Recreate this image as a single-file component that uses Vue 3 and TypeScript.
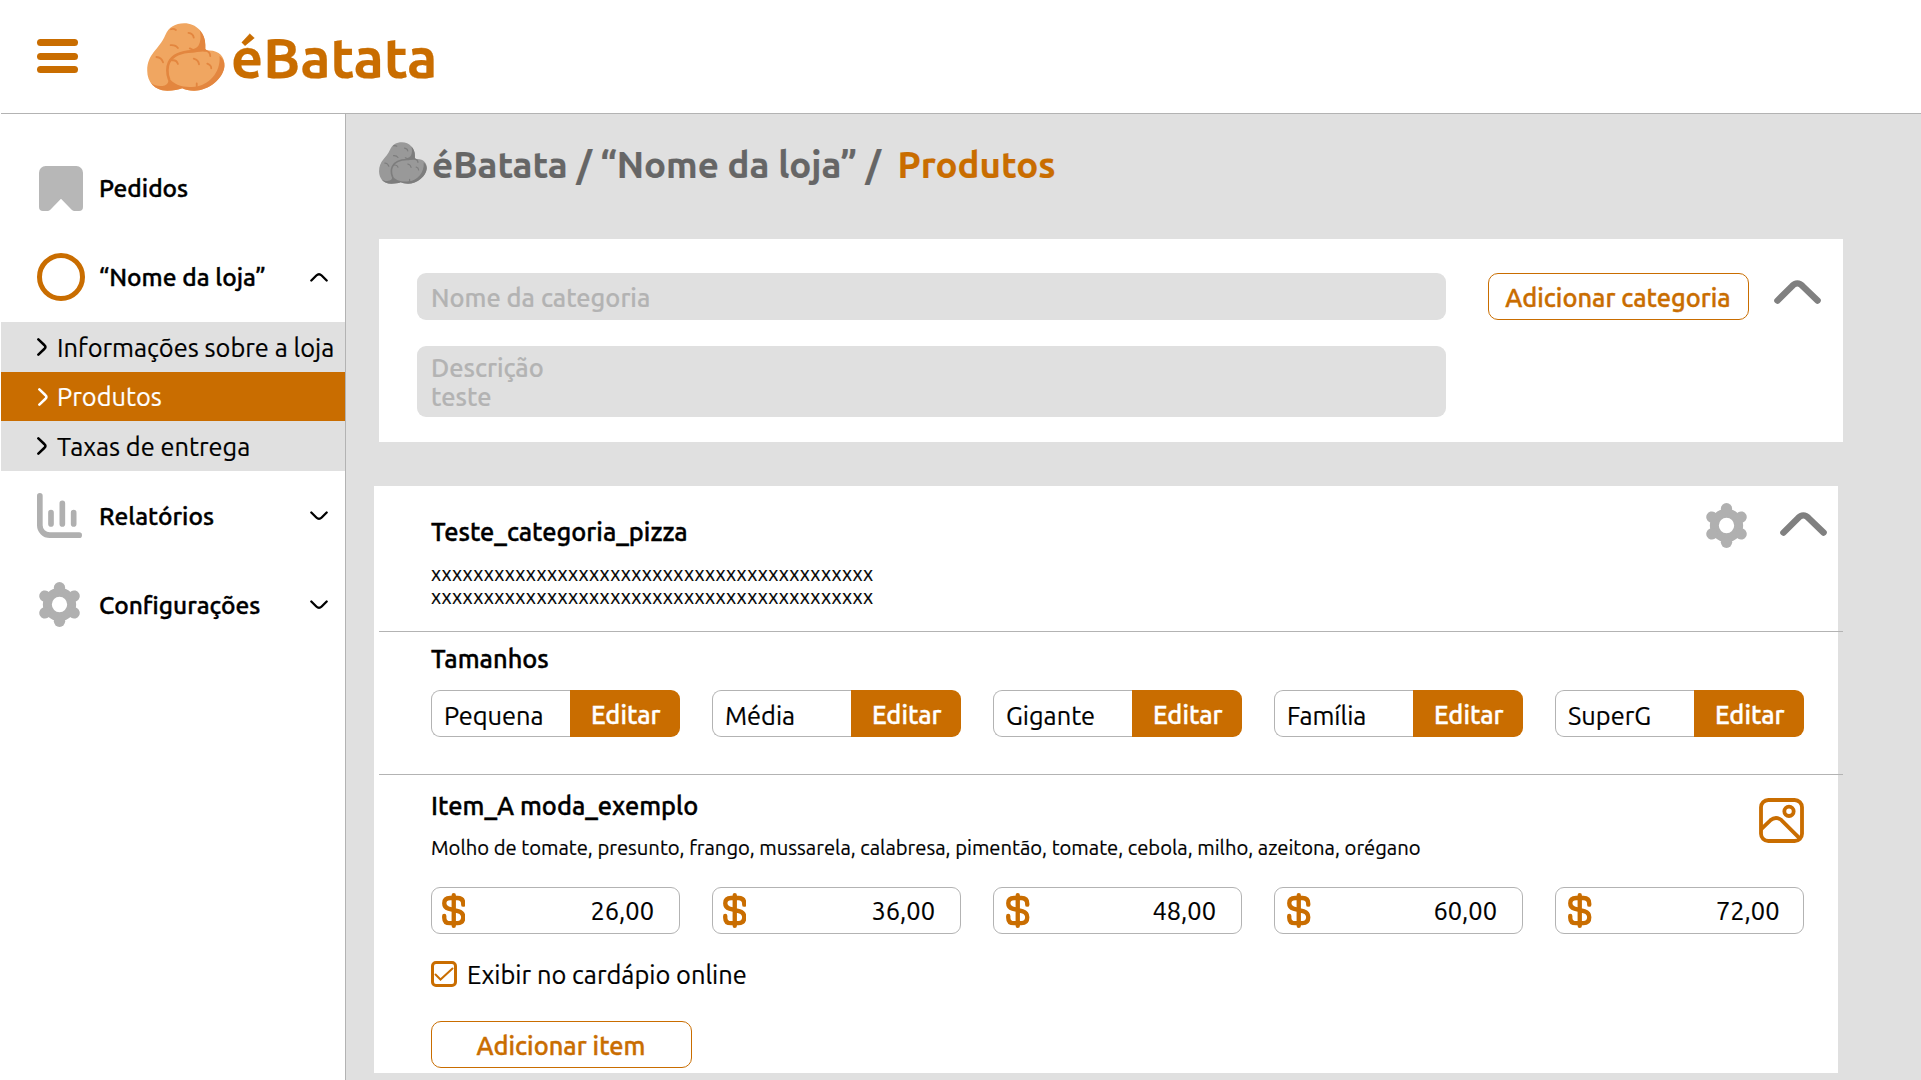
<script setup lang="ts">
import { h, type FunctionalComponent } from 'vue'

interface Size { name: string; price: string; wideInset: boolean }

const sizes: Size[] = [
  { name: 'Pequena', price: '26,00', wideInset: false },
  { name: 'Média', price: '36,00', wideInset: false },
  { name: 'Gigante', price: '48,00', wideInset: true },
  { name: 'Família', price: '60,00', wideInset: true },
  { name: 'SuperG', price: '72,00', wideInset: true },
]

const subItems = [
  { label: 'Informações sobre a loja', active: false },
  { label: 'Produtos', active: true },
  { label: 'Taxas de entrega', active: false },
]

const filler = 'x'.repeat(42)

const Potatoes: FunctionalComponent<{ body: string; shade: string }> = (p) =>
  h('svg', { viewBox: '441 68 235 206' }, [
    h('path', { fill: p.body, d: 'M553 69C590 69 617 98 617 135V152C655 146 676 168 675 196C674 232 630 273 583 273C568 273 556 270 547 266C535 271 520 273 502 273C463 273 441 247 441 212C441 160 476 150 496 104C506 81 526 69 553 69Z' }),
    h('path', { fill: p.shade, d: 'M600 90C612 102 617 117 617 135V151C600 149 590 156 574 156L560 155C572 148 590 147 596 137C604 124 604 105 600 90Z' }),
    h('path', { fill: p.shade, d: 'M452 249C463 259 480 261 494 257C506 253 507 242 503 231C523 258 554 265 585 261C625 258 665 219 660 168C671 175 676 187 675 199C672 236 628 273 583 273C568 273 556 270 547 266C535 271 520 273 502 273C479 273 462 264 452 249Z' }),
    h('path', { fill: 'none', stroke: p.shade, 'stroke-width': 8, 'stroke-linecap': 'round', d: 'M507 238C500 222 501 200 507 187C520 162 545 155 578 154C592 153 602 149 616 151' }),
    h('path', { fill: 'none', stroke: p.shade, 'stroke-width': 5.5, 'stroke-linecap': 'round', d: 'M513 87Q521 84 528 89M566 98Q580 100 582 112M512 135Q528 134 534 144M469 171Q484 172 489 187M570 145L579 149M516 181Q530 179 534 192M582 176Q596 180 598 193M618 152Q631 155 632 168M623 191Q635 195 635 205M591 251V264' }),
  ])

const Gear: FunctionalComponent = () =>
  h('svg', { viewBox: '-61.5 -67.5 123 135', fill: '#b0b0b0' }, [
    h('path', { 'fill-rule': 'evenodd', d: 'M-50 0A50 50 0 1 1 50 0A50 50 0 1 1-50 0ZM-23 0A23 23 0 1 0 23 0A23 23 0 1 0-23 0Z' }),
    ...[0, 60, 120, 180, 240, 300].map((a) =>
      h('circle', { cy: -50.5, r: 17, transform: `rotate(${a})` })),
  ])

const BigChevron: FunctionalComponent = () =>
  h('svg', { viewBox: '1122 152 141 73' }, [
    h('path', { d: 'M1132 214L1175 171.500Q1192 153 1209 171.500L1253 214', fill: 'none', stroke: '#808080', 'stroke-width': 19, 'stroke-linecap': 'round' }),
  ])

const SmallChevron: FunctionalComponent = () =>
  h('svg', { viewBox: '930 431 54 29' }, [
    h('path', { d: 'M934 456L949 441Q957 433 965 441L980 456', fill: 'none', stroke: '#000', 'stroke-width': 7, 'stroke-linecap': 'round' }),
  ])
</script>

<template>
  <div class="page">
    <header class="topbar">
      <div class="burger"><i></i><i></i><i></i></div>
      <Potatoes class="logo" body="#f0a661" shade="#e3863f" />
      <span class="brand">éBatata</span>
    </header>

    <div class="body">
      <nav class="sidebar">
        <div class="nav-row">
          <span class="nav-icon">
            <svg class="i-bookmark" viewBox="117 108 132 135"><path fill="#b7b7b7" d="M137 108H229a20 20 0 0 1 20 20V231a12 12 0 0 1-12 12H224q-5 0-9-4L183 206 151 239q-4 4-9 4H129a12 12 0 0 1-12-12V128a20 20 0 0 1 20-20z" /></svg>
          </span>
          <span>Pedidos</span>
        </div>
        <div class="nav-row">
          <span class="nav-icon"><span class="ring"></span></span>
          <span>“Nome da loja”</span>
          <SmallChevron class="caret" />
        </div>
        <ul class="sub">
          <li v-for="s in subItems" :key="s.label" :class="{ active: s.active }">
            <svg viewBox="110 625 29 52"><path d="M114 629L131 645Q138 651 131 657L114 673" /></svg>
            <span>{{ s.label }}</span>
          </li>
        </ul>
        <div class="nav-row">
          <span class="nav-icon">
            <svg class="i-chart" viewBox="111 369 135 135"><path d="M119.500 377.500V465A30 30 0 0 0 149.500 495.500H237.500M153 428V462M187 400V462M221 428V462" /></svg>
          </span>
          <span>Relatórios</span>
          <SmallChevron class="caret down" />
        </div>
        <div class="nav-row">
          <span class="nav-icon"><Gear class="gear side" /></span>
          <span>Configurações</span>
          <SmallChevron class="caret down" />
        </div>
      </nav>

      <main class="main">
        <h1 class="crumbs">
          <Potatoes class="crumb-logo" body="#999999" shade="#7d7d7d" />
          <span>éBatata / “Nome da loja” /</span>
          <span class="current">Produtos</span>
        </h1>

        <section class="card new-category">
          <div class="fields">
            <div class="field"><span>Nome da categoria</span></div>
            <div class="field tall">
              <span>Descrição</span>
              <span>teste</span>
            </div>
          </div>
          <button class="outline">Adicionar categoria</button>
          <BigChevron class="big-chevron" />
        </section>

        <section class="card category">
          <div class="cat-head">
            <div class="grow">
              <h2>Teste_categoria_pizza</h2>
              <p class="small">
                <span>{{ filler }}</span>
                <span>{{ filler }}</span>
              </p>
            </div>
            <Gear class="gear" />
            <BigChevron class="big-chevron" />
          </div>

          <hr />

          <div class="sizes-block">
            <h2>Tamanhos</h2>
            <div class="boxes sizes">
              <div v-for="s in sizes" :key="s.name" class="box">
                <div class="size-name">{{ s.name }}</div>
                <button class="edit">Editar</button>
              </div>
            </div>
          </div>

          <hr />

          <div class="item">
            <div class="item-head">
              <div class="grow">
                <h2>Item_A moda_exemplo</h2>
                <p class="small desc">Molho de tomate, presunto, frango, mussarela, calabresa, pimentão, tomate, cebola, milho, azeitona, orégano</p>
              </div>
              <svg class="picture" viewBox="957 144 135 135">
                <rect x="963" y="150" width="123" height="123" rx="22" />
                <circle cx="1047" cy="184" r="14" />
                <path d="M963 238L991 211Q1008 197 1025 211L1082 268" />
              </svg>
            </div>
            <div class="boxes prices">
              <div v-for="s in sizes" :key="s.name" class="box price" :class="{ wide: s.wideInset }">
                <svg viewBox="384 429 70 105"><path d="M447.500 464V461Q447.500 444 430 444H408Q390.500 444 390.500 460Q390.500 473 403 476L434 484Q447.500 488 447.500 502Q447.500 519.500 430 519.500H408Q390.500 519.500 390.500 503V498M419 435.500V527.500" /></svg>
                <span>{{ s.price }}</span>
              </div>
            </div>
            <div class="check-row">
              <span class="check"><svg viewBox="0 0 26 26"><path d="M4.500 13.500L9.500 18.500L21.500 7.500" /></svg></span>
              <span class="check-label">Exibir no cardápio online</span>
            </div>
            <button class="outline add-item">Adicionar item</button>
          </div>
        </section>
      </main>
    </div>
  </div>
</template>

<style>
body { margin: 0; overflow: hidden; }
</style>

<style scoped>
* { box-sizing: border-box; }
.page {
  width: 1921px; height: 1080px; overflow: hidden;
  display: flex; flex-direction: column;
  background: #fff; color: #000;
  font-family: Ubuntu, "Noto Sans", sans-serif;
  font-size: 25.4px; line-height: 30px; white-space: nowrap;
  -webkit-text-stroke: 0.2px;
}
svg { display: block; flex: none; }
h1, h2, p, ul { margin: 0; padding: 0; }
h2 { font-size: inherit; font-weight: 500; height: 30px; line-height: 32px; -webkit-text-stroke: 0.4px; }
button { font: inherit; padding: 0; margin: 0; display: flex; align-items: center; justify-content: center; }

.topbar { height: 114px; margin-left: 1px; padding-left: 36px; display: flex; flex: none; border-bottom: 1px solid #b3b3b3; }
.burger { width: 41px; height: 34px; margin-top: 39px; display: flex; flex-direction: column; justify-content: space-between; }
.burger i { height: 7px; border-radius: 4px; background: #c96d00; }
.logo { width: 78px; height: 68px; margin: 23px 0 0 69px; }
.brand { margin-left: 6px; margin-top: 28px; font-size: 55.8px; line-height: 60px; height: 60px; font-weight: 700; color: #c96d00; }

.body { flex: 1; display: flex; min-height: 0; }
.sidebar { width: 346px; flex: none; padding: 50px 0 0 1px; border-right: 1px solid #b3b3b3; font-size: 24.5px; font-weight: 500; -webkit-text-stroke: 0.4px; }
.nav-row { height: 48px; margin-bottom: 41px; display: flex; align-items: center; padding: 0 17px 0 36px; }
.nav-icon { width: 62px; flex: none; }
.caret { width: 18px; height: 10px; margin-left: auto; }
.caret.down { transform: scaleY(-1); }
.ring { display: block; width: 48px; height: 48px; border: 5px solid #c96d00; border-radius: 50%; }
.i-bookmark { width: 44px; height: 45px; margin-left: 2px; }
.i-chart { width: 45px; height: 45px; margin-bottom: 1px; }
.i-chart path { fill: none; stroke: #b0b0b0; stroke-width: 17; stroke-linecap: round; }
.gear { width: 41px; height: 45px; }
.gear.side { margin: 0 0 1px 2px; }
.sub { list-style: none; margin: -20px 0 21px; font-size: 25.4px; font-weight: 400; background: #e0e0e0; -webkit-text-stroke: 0.2px; }
.sub li { height: 50px; display: flex; align-items: center; padding-left: 36px; }
.sub li span { padding-top: 1px; }
.sub li svg { width: 10px; height: 18px; margin-right: 10px; }
.sub li path { fill: none; stroke: #000; stroke-width: 7.5; stroke-linecap: round; }
.sub li.active { height: 49px; background: #c96d00; color: #fff; padding-left: 37px; }
.sub li.active svg { margin-right: 9px; }
.sub li.active path { stroke: #fff; }

.main { flex: 1; min-width: 0; background: #e0e0e0; }
.crumbs { display: flex; height: 125px; padding: 28px 0 0 33px; font-size: 36.7px; line-height: 46px; font-weight: 700; color: #666; }
.crumb-logo { width: 48px; height: 42px; margin-right: 5px; }
.crumbs .current { color: #c96d00; margin-left: 16.5px; }

.card { background: #fff; width: 1464px; }
.new-category { height: 203px; margin-left: 33px; padding: 34px 22px 0 38px; display: flex; align-items: flex-start; }
.fields { width: 1029px; margin-right: 42px; font-weight: 500; color: #b3b3b3; }
.field { height: 47px; padding: 10px 0 0 14px; border-radius: 9px; background: #e0e0e0; }
.field.tall { height: 71px; margin-top: 26px; padding-top: 7px; display: flex; flex-direction: column; align-items: flex-start; line-height: 29px; }
.outline { width: 261px; height: 47px; background: #fff; border: 1px solid #c96d00; border-radius: 10px; color: #c96d00; font-weight: 500; padding: 2px 1px 0 0; -webkit-text-stroke: 0.4px; }
.big-chevron { width: 47px; height: 24.3px; }
.new-category .big-chevron { margin: 7.3px 0 0 auto; }

.category { height: 587px; margin: 44px 0 0 28px; }
.category hr { height: 1px; border: 0; background: #b3b3b3; margin: 0 -5px 0 5px; }
.cat-head { height: 145px; display: flex; padding: 0 11px 0 57px; }
.grow { flex: 1; min-width: 0; }
.cat-head h2 { margin-top: 30px; }
.cat-head .gear { margin: 17px 33px 0 0; }
.cat-head .big-chevron { margin-top: 25.7px; }
.small { font-size: 20.22px; line-height: 23px; }
.cat-head .small { font-size: 20.13px; margin-top: 16px; display: flex; flex-direction: column; align-items: flex-start; }
.sizes-block { height: 142px; padding: 11px 0 0 57px; }
.boxes { display: flex; gap: 32px; }
.sizes { margin-top: 17px; }
.box { width: 249px; height: 47px; display: flex; flex: none; }
.size-name { width: 139px; padding: 10px 0 0 12px; border: 1px solid #b3b3b3; border-right: 0; border-radius: 9px 0 0 9px; }
.edit { width: 110px; border: 0; border-radius: 0 9px 9px 0; background: #c96d00; color: #fff; font-weight: 500; justify-content: flex-start; padding: 2px 0 0 21px; -webkit-text-stroke: 0.4px; }
.item { padding-left: 57px; }
.item-head { display: flex; padding-right: 34px; height: 112px; }
.item-head h2 { margin: 15px 0 0; }
.desc { margin: 16px 0 0; height: 23px; }
.picture { width: 45px; height: 45px; margin-top: 23px; }
.picture * { fill: none; stroke: #c96d00; stroke-width: 11.5; }
.price { border: 1px solid #b3b3b3; border-radius: 9px; padding: 0 25px 0 9.7px; align-items: center; justify-content: space-between; }
.price.wide { padding-left: 12px; }
.price:last-child { padding-right: 23.5px; }
.price svg { width: 23.5px; height: 35px; margin-top: -1px; }
.price path { fill: none; stroke: #c96d00; stroke-width: 13; stroke-linecap: round; }
.check-row { display: flex; align-items: center; height: 26px; margin-top: 27px; gap: 10px; }
.check-label { padding-top: 1px; }
.check { width: 26px; height: 26px; border: 3px solid #c96d00; border-radius: 5px; display: flex; align-items: center; justify-content: center; }
.check svg { width: 26px; height: 26px; }
.check path { fill: none; stroke: #c96d00; stroke-width: 2; stroke-linecap: round; }
.add-item { margin-top: 34px; }
</style>
